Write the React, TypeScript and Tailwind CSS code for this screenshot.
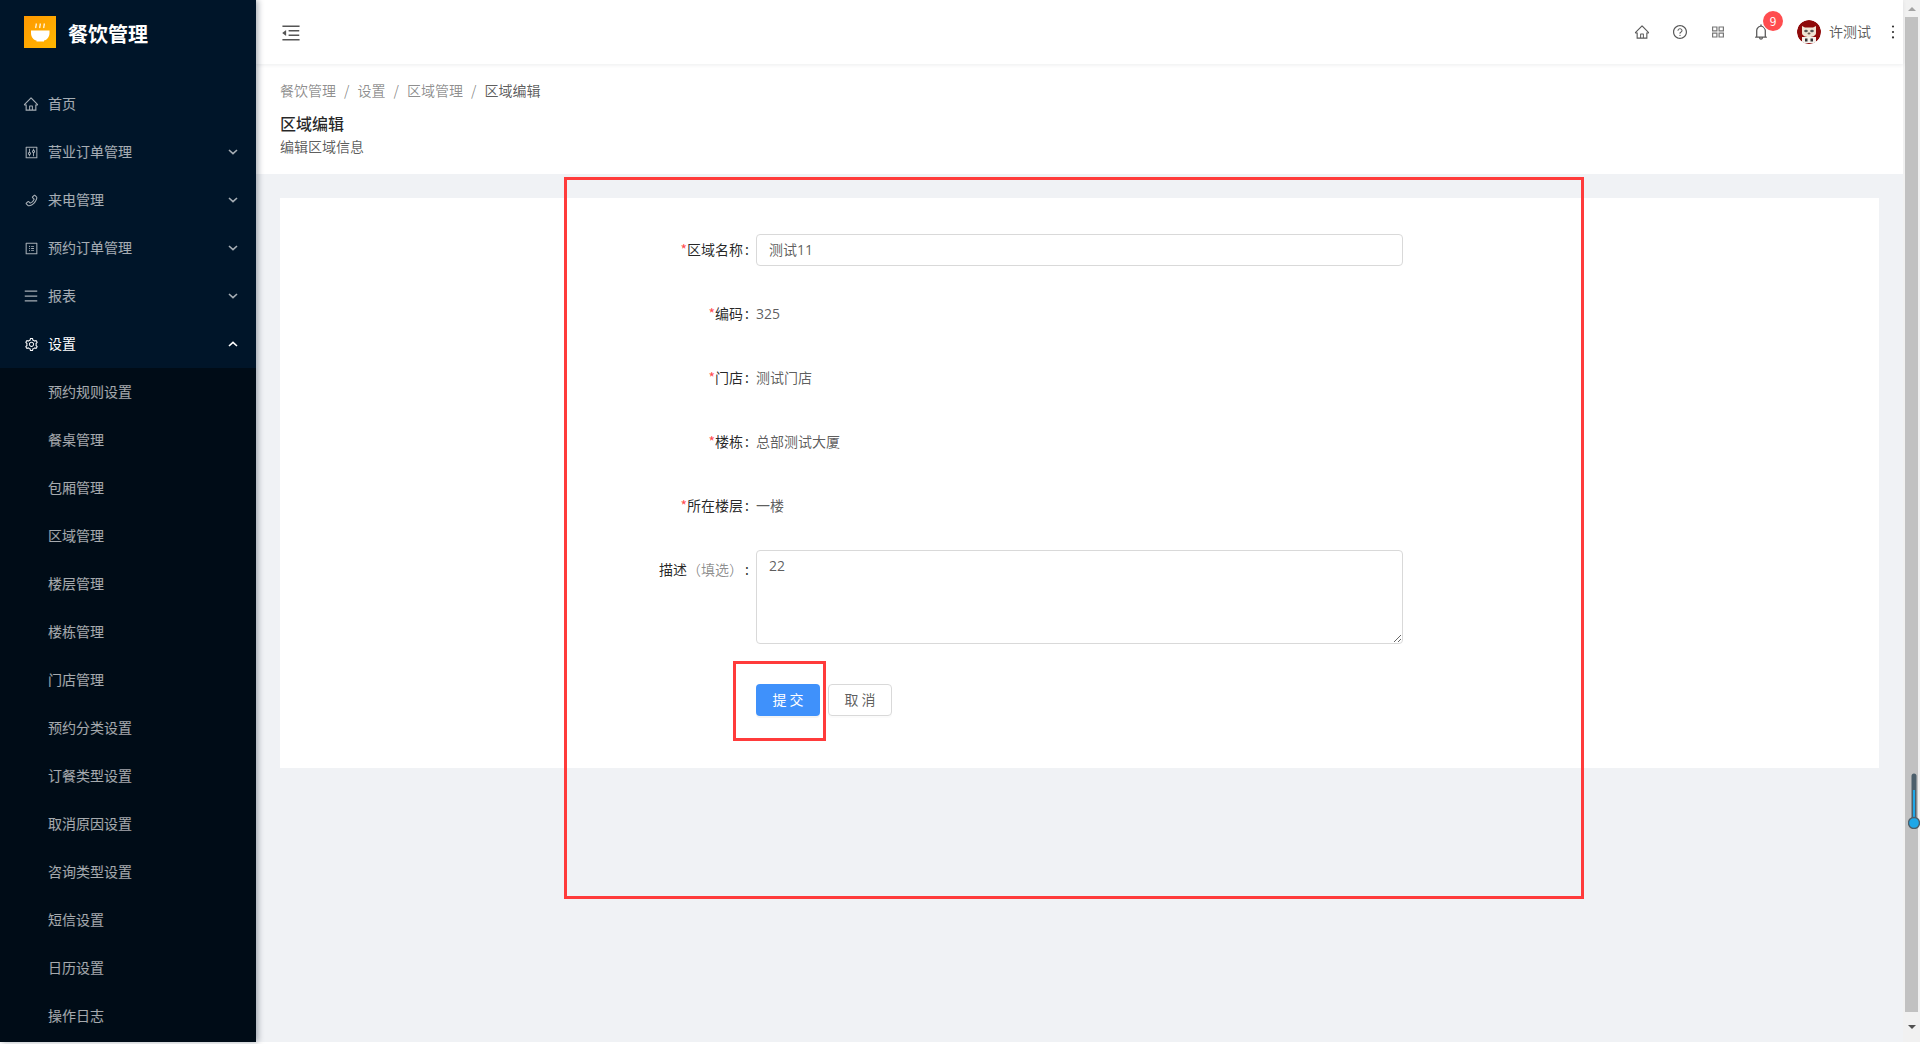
import {
  AiOutlineBell,
  AiOutlineControl,
  AiOutlineHome,
  AiOutlineMenu,
  AiOutlineMenuFold,
  AiOutlineMore,
  AiOutlinePhone,
  AiOutlineProfile,
  AiOutlineQuestionCircle,
  AiOutlineSetting,
} from 'react-icons/ai';

const menus = [
  { name: '首页', icon: AiOutlineHome, size: 16 },
  { name: '营业订单管理', icon: AiOutlineControl, size: 15, arrow: true },
  { name: '来电管理', icon: AiOutlinePhone, size: 15, arrow: true },
  { name: '预约订单管理', icon: AiOutlineProfile, size: 15, arrow: true },
  { name: '报表', icon: AiOutlineMenu, size: 16, arrow: true },
];

const subMenus = [
  '预约规则设置',
  '餐桌管理',
  '包厢管理',
  '区域管理',
  '楼层管理',
  '楼栋管理',
  '门店管理',
  '预约分类设置',
  '订餐类型设置',
  '取消原因设置',
  '咨询类型设置',
  '短信设置',
  '日历设置',
  '操作日志',
];

const crumbs = ['餐饮管理', '设置', '区域管理'];

const infoRows = [
  { label: '编码', value: '325' },
  { label: '门店', value: '测试门店' },
  { label: '楼栋', value: '总部测试大厦' },
  { label: '所在楼层', value: '一楼' },
];

function Chevron({ up }: { up?: boolean }) {
  return (
    <svg viewBox="0 0 10 6" className="h-[6px] w-[10px]" fill="none" stroke="currentColor" strokeWidth="1.6">
      <path d={up ? 'M1 5l4-3.6L9 5' : 'M1 1l4 3.6L9 1'} />
    </svg>
  );
}

function Logo() {
  return (
    <svg viewBox="0 0 32 32" className="h-8 w-8">
      <defs>
        <linearGradient id="logo" x1="0" y1="0" x2="1" y2="1">
          <stop offset="0" stopColor="#ff9800" />
          <stop offset="1" stopColor="#ffb800" />
        </linearGradient>
      </defs>
      <rect width="32" height="32" fill="url(#logo)" />
      <path d="M7 14.5h18.5v2.5c0 4.2-2.6 6.8-5.5 7.6v1h-7.5v-1c-3-.8-5.5-3.4-5.5-7.6z" fill="#fff" />
      <path d="M12 12c-1-1.5 1-2.5 0-4.5M16 12c-1-1.5 1-2.5 0-4.5M20 12c-1-1.5 1-2.5 0-4.5" stroke="#fff" strokeWidth="1.2" fill="none" />
    </svg>
  );
}

function Avatar() {
  return (
    <svg viewBox="0 0 24 24" className="h-6 w-6 rounded-full">
      <circle cx="12" cy="12" r="12" fill="#8f0a0a" />
      <path d="M5 6l3 1.5h8l3-1.5v7c0 2.5-3 4-7 4s-7-1.5-7-4z" fill="#efe3d3" />
      <ellipse cx="9" cy="11" rx="1.8" ry="1.3" fill="#555" />
      <ellipse cx="15" cy="11" rx="1.8" ry="1.3" fill="#555" />
      <ellipse cx="12" cy="13.5" rx="1.5" ry="1" fill="#6b5a50" />
      <rect x="5" y="17" width="14" height="6" fill="#f4f1ec" />
      <path d="M8 18.5h2.5v3H8zM13.5 18.5H16v3h-2.5z" fill="#333" />
    </svg>
  );
}

function AppsIcon() {
  return (
    <svg viewBox="0 0 12 12" className="h-[12px] w-[12px] text-[#777]" fill="none" stroke="currentColor" strokeWidth="1.2">
      <path d="M.6 1h4.3v3.8H.6zM7.1 1h4.3v3.8H7.1zM.6 7.2h4.3V11H.6zM7.1 7.2h4.3V11H7.1z" />
    </svg>
  );
}

function Sidebar() {
  return (
    <aside className="relative z-10 flex h-full w-[256px] shrink-0 flex-col bg-[#001529] text-sm text-white/65 shadow-[2px_0_6px_rgba(0,21,41,0.35)]">
      <div className="flex h-20 items-start pl-6 pt-4">
        <Logo />
        <span className="ml-3 text-xl leading-9 font-bold text-white">餐饮管理</span>
      </div>
      {menus.map((menu) => (
        <div key={menu.name} className="flex h-12 items-center pl-[23px] pr-[18px]">
          <span className="flex w-4 justify-center">
            <menu.icon size={menu.size} />
          </span>
          <span className="-mt-[2px] ml-[9px] flex-1">{menu.name}</span>
          {menu.arrow && <Chevron />}
        </div>
      ))}
      <div className="flex h-12 items-center pl-[23px] pr-[18px] text-white">
        <span className="flex w-4 justify-center">
          <AiOutlineSetting size={15} />
        </span>
        <span className="-mt-[2px] ml-[9px] flex-1">设置</span>
        <Chevron up />
      </div>
      <div className="flex-1 bg-[#000c17]">
        {subMenus.map((name) => (
          <div key={name} className="flex h-12 items-center pb-[2px] pl-12">
            {name}
          </div>
        ))}
      </div>
    </aside>
  );
}

function Topbar() {
  return (
    <header className="relative z-[1] flex h-16 shrink-0 items-center bg-white pl-6 text-[#595959] shadow-[0_1px_4px_rgba(0,21,41,0.08)]">
      <AiOutlineMenuFold className="mt-[2px] h-[22px] w-[22px] text-[#555]" />
      <div className="ml-auto flex items-center">
        <AiOutlineHome className="h-[16px] w-[16px]" />
        <AiOutlineQuestionCircle className="ml-[22px] h-[16px] w-[16px]" />
        <div className="ml-[24px]">
          <AppsIcon />
        </div>
        <div className="relative ml-[28px]">
          <AiOutlineBell className="h-[18px] w-[18px]" />
          <span className="absolute -right-[13px] -top-[12px] flex h-5 w-5 items-center justify-center rounded-full bg-[#ff4d4f] text-xs text-white shadow-[0_0_0_1px_#fff]">
            9
          </span>
        </div>
        <div className="ml-[27px]">
          <Avatar />
        </div>
        <span className="-mt-[2px] ml-2 text-sm text-black/65">许测试</span>
        <AiOutlineMore className="ml-[12px] h-[20px] w-[20px] text-[#333]" />
      </div>
    </header>
  );
}

function PageHeader() {
  return (
    <section className="h-[110px] shrink-0 bg-white px-6 pt-[15px]">
      <div className="flex h-[22px] items-center text-sm text-black/45">
        {crumbs.map((crumb) => (
          <span key={crumb} className="flex items-center">
            {crumb}
            <span className="mx-2">/</span>
          </span>
        ))}
        <span className="text-black/65">区域编辑</span>
      </div>
      <h1 className="mt-[10px] text-base leading-6 font-medium text-black/85">区域编辑</h1>
      <p className="text-sm leading-[22px] text-black/65">编辑区域信息</p>
    </section>
  );
}

function Label({ text }: { text: string }) {
  return (
    <div className="w-[476px] shrink-0 pr-[7px] text-right text-sm leading-[30px] text-black/85">
      <span className="text-[#ff4d4f]">*</span>
      {text}
      <span className="ml-[2px]">:</span>
    </div>
  );
}

function EditForm() {
  return (
    <div className="mx-6 mt-6 h-[570px] bg-white pt-9 text-sm">
      <div className="flex h-8">
        <Label text="区域名称" />
        <input
          defaultValue="测试11"
          className="h-8 w-[647px] rounded border border-[#d9d9d9] px-3 pb-[2px] font-['Open_Sans','Noto_Sans_CJK_SC',sans-serif] text-black/65 outline-none"
        />
      </div>
      {infoRows.map((row) => (
        <div key={row.label} className="mt-8 flex h-8">
          <Label text={row.label} />
          <span className="font-['Open_Sans','Noto_Sans_CJK_SC',sans-serif] leading-8 text-black/65">{row.value}</span>
        </div>
      ))}
      <div className="mt-7 flex">
        <div className="w-[476px] shrink-0 pr-[7px] pt-[4px] text-right leading-[30px] text-black/85">
          描述<span className="text-black/45">（填选）</span>
          <span className="ml-[2px]">:</span>
        </div>
        <textarea
          defaultValue="22"
          className="h-[94px] w-[647px] rounded border border-[#d9d9d9] px-3 pb-1 pt-[4px] font-['Open_Sans','Noto_Sans_CJK_SC',sans-serif] leading-[22px] text-black/65 outline-none"
        />
      </div>
      <div className="ml-[476px] mt-[40px] flex gap-2">
        <button className="h-8 w-16 rounded bg-[#3f91fb] pb-[2px] text-white shadow-[0_2px_0_rgba(0,0,0,0.045)]">
          提 交
        </button>
        <button className="h-8 w-16 rounded border border-[#d9d9d9] bg-white pb-[2px] text-black/65 shadow-[0_2px_0_rgba(0,0,0,0.015)]">
          取 消
        </button>
      </div>
    </div>
  );
}

function Scrollbar() {
  return (
    <div className="relative flex h-full w-[17px] shrink-0 flex-col bg-[#f1f1f1]">
      <div className="flex h-[17px] items-center justify-center">
        <div className="h-0 w-0 border-x-[4px] border-b-[4px] border-x-transparent border-b-[#a3a3a3]" />
      </div>
      <div className="ml-[2px] w-[13px] flex-1 bg-[#c1c1c1]" />
      <div className="flex h-[30px] items-center justify-center">
        <div className="h-0 w-0 border-x-[4px] border-t-[4px] border-x-transparent border-t-[#505050]" />
      </div>
    </div>
  );
}

export default function App() {
  return (
    <div className="relative h-[1044px] w-[1920px] overflow-hidden bg-white font-['Noto_Sans_CJK_SC','Noto_Sans',sans-serif]">
      <div className="flex h-[1042px]">
        <Sidebar />
        <main className="flex min-w-0 flex-1 flex-col bg-[#f0f2f5]">
          <Topbar />
          <PageHeader />
          <EditForm />
        </main>
        <Scrollbar />
      </div>

      {/* annotation boxes drawn on the screenshot */}
      <div className="absolute left-[564px] top-[177px] h-[722px] w-[1020px] border-[3px] border-[#ff3b3b]" />
      <div className="absolute left-[733px] top-[661px] h-[80px] w-[93px] border-[3px] border-[#ff3b3b]" />

      {/* thermometer widget over the scrollbar */}
      <svg viewBox="0 0 12 56" className="absolute left-[1908px] top-[773px] h-[56px] w-[12px]">
        <rect x="3.5" y="0.5" width="5" height="48" rx="2.5" fill="#4c5f6b" />
        <rect x="5" y="17" width="2" height="30" fill="#1ea7e8" />
        <circle cx="6" cy="50" r="5.5" fill="#1ea7e8" stroke="#4c5f6b" strokeWidth="1.4" />
      </svg>
    </div>
  );
}
